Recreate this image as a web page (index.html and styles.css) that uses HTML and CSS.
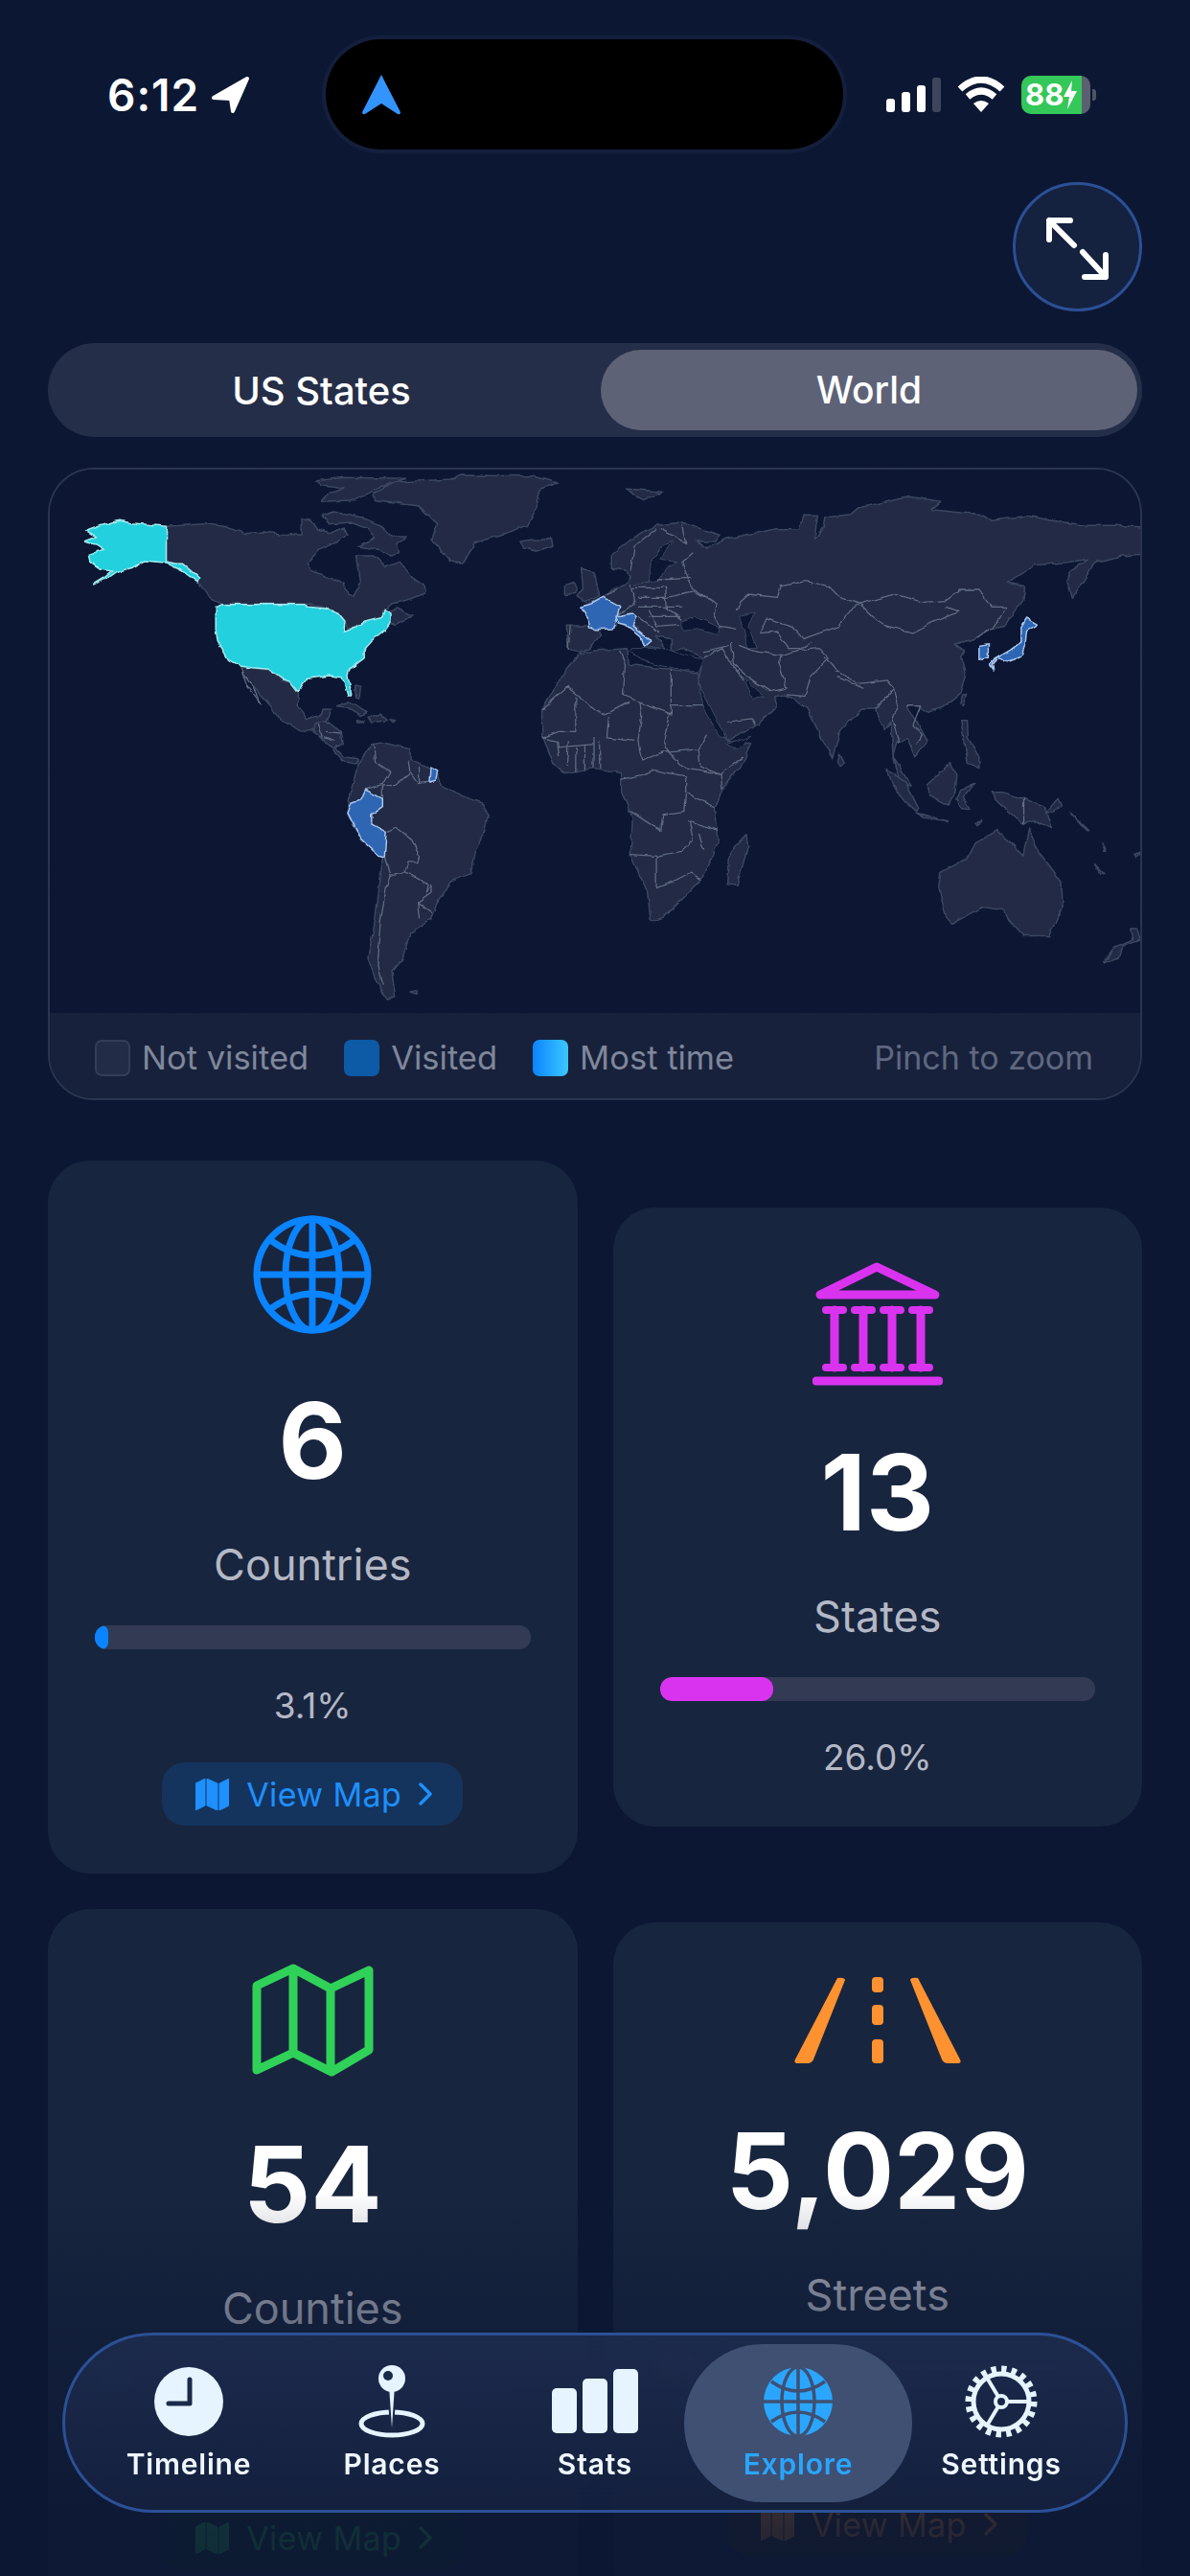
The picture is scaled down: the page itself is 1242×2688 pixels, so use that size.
FILE: index.html
```html
<!DOCTYPE html>
<html lang="en">
<head>
    <meta charset="UTF-8">
    <meta name="viewport" content="width=device-width, initial-scale=1.0">
    <title>Explore</title>
    <link rel="stylesheet" href="styles.css">
</head>
<body>
    <header class="status">
        <div class="status-left">
            <span class="clock">6:12</span>
            <svg class="loc-arrow" width="40" height="38" viewBox="0 0 40 38"><path d="M38 2 L3 22 L21 23 L23 36 Z"/></svg>
        </div>
        <div class="island">
            <svg width="40" height="42" viewBox="0 0 40 42"><path d="M20 0 Q24 8 40 39 Q40 42 37 41 L20 30 L3 41 Q0 42 0 39 Q16 8 20 0 Z" fill="#3393ff"/></svg>
        </div>
        <div class="status-right">
            <div class="signal">
                <i class="sig sig-1"></i><i class="sig sig-2"></i><i class="sig sig-3"></i><i class="sig sig-4"></i>
            </div>
            <svg class="wifi" width="50" height="37" viewBox="0 0 50 37">
                <path d="M3 13 Q25 -7 47 13" />
                <path d="M11 21 Q25 9 39 21" />
                <path class="wifi-dot" d="M17 28 Q25 22 33 28 L25 37 Z"/>
            </svg>
            <div class="battery">
                <span>88</span>
                <svg width="14" height="30" viewBox="0 0 14 30"><path d="M9 0 L0 17 L6 17 L4 30 L14 11 L8 11 Z" fill="#fff"/></svg>
            </div>
            <i class="battery-nub"></i>
        </div>
    </header>

    <div class="expand-row">
        <button class="expand-btn">
            <svg width="135" height="135" viewBox="0 0 135 135">
                <path d="M38 40 L64 66 M38 60 L38 40 L60 40 M73 73 L97 99 M97 76 L97 99 L75 99"/>
            </svg>
        </button>
    </div>

    <div class="segment">
        <div class="seg-item">US States</div>
        <div class="seg-item seg-active">World</div>
    </div>

    <section class="map-card">
        <svg class="map" width="1138" height="567" viewBox="52 490 1138 567">
            <defs>
                <filter id="rough" x="0" y="0" width="100%" height="100%">
                    <feTurbulence type="fractalNoise" baseFrequency="0.09" numOctaves="2" seed="4"/>
                    <feDisplacementMap in="SourceGraphic" scale="5" xChannelSelector="R" yChannelSelector="G"/>
                </filter>
            </defs>
            <g filter="url(#rough)">
            <rect x="52" y="490" width="1138" height="567" fill="#0a1732"/>
            <!-- americas -->
            <g transform="translate(30 480) scale(.3827 .3333)">
                <path class="land" d="M375 208 L480 200 L530 208 L590 230 L640 225 L690 232 L745 235 L745 185 L770 190 L790 220 L820 230 L860 210 L870 235 L830 260 L790 280 L760 320 L770 345 L810 365 L860 385 L870 420 L885 425 L905 380 L895 300 L940 300 L975 335 L1010 320 L1050 370 L1080 395 L1083 415 L1040 435 L990 450 L965 475 L1005 465 L1048 488 L1000 518 L985 510 L960 495 L935 500 L870 530 L862 500 L840 475 L800 460 L755 450 L525 450 L490 430 L465 385 L440 350 L415 325 L375 318 Z"/>
                <path class="land" d="M800 175 L830 162 L880 175 L920 185 L960 205 L990 240 L1030 240 L1005 265 L1010 290 L990 300 L950 280 L895 270 L925 255 L945 245 L925 215 L880 195 L820 200 Z"/>
                <path class="land" d="M785 65 L860 55 L1030 58 L960 85 L890 125 L800 130 L815 105 L860 90 L800 80 Z"/>
                <path class="land" d="M940 105 L1000 70 L1150 60 L1180 48 L1370 50 L1445 72 L1395 90 L1385 150 L1360 205 L1300 230 L1215 260 L1185 325 L1150 318 L1100 250 L1115 200 L1060 140 L945 125 Z"/>
                <path class="land" d="M1340 255 L1370 250 L1425 248 L1430 268 L1385 285 L1350 275 Z"/>
                <path class="land" d="M575 648 L610 652 L655 658 L690 690 L715 698 L735 728 L735 770 L760 810 L795 800 L800 780 L825 780 L815 815 L790 825 L780 850 L740 845 L680 810 L660 770 L620 720 L590 680 Z"/>
                <path class="border" d="M580 655 L610 710 L635 762 L595 710 Z"/>
                <path class="land" d="M780 825 L810 815 L850 850 L855 890 L835 900 L860 930 L900 935 L895 950 L860 945 L830 905 L800 870 L775 850 Z"/>
                <path class="border" d="M790 825 L800 868 M810 850 L850 855 M805 870 L840 880"/>
                <path class="land" d="M840 770 L870 758 L925 790 L905 800 L870 775 Z"/>
                <path class="land" d="M925 805 L960 795 L975 815 L935 822 Z"/>
                <path class="land" d="M895 815 L912 815 L910 822 L895 822 Z"/>
                <path class="land" d="M985 812 L1002 815 L995 822 Z"/>
                <path class="land" d="M890 710 L905 715 L900 750 L893 745 Z"/>
                <path class="land" d="M900 950 L935 890 L965 885 L1040 905 L1040 935 L1090 965 L1115 985 L1130 1025 L1190 1055 L1240 1075 L1255 1115 L1240 1170 L1215 1230 L1205 1295 L1150 1320 L1110 1395 L1095 1440 L1040 1480 L1020 1560 L990 1600 L1000 1680 L975 1686 L945 1620 L925 1560 L945 1440 L960 1300 L965 1245 L905 1190 L870 1110 L875 1050 Z"/>
                <path class="land" d="M1040 1665 L1060 1660 L1058 1672 Z"/>
                <path class="border" d="M940 890 L945 945 L985 975 L965 1015 L918 1032 M965 1060 L965 1020 L1000 1018 L1040 980 L1035 940 M1040 980 L1060 1010 L1095 1005 M1065 960 L1065 1010 M975 1165 L1000 1150 L1045 1190 L1065 1240 L1060 1260 L1035 1260 L1025 1290 L1060 1310 L1090 1330 L1085 1355 M970 1245 L985 1300 L975 1340 L960 1440 L950 1560 L965 1640 M985 1300 L1025 1290 M1085 1355 L1100 1330 L1100 1350 L1060 1385 L1100 1415 M1060 1385 L1065 1435"/>
                <path class="hi" d="M150 255 L185 240 L158 222 L200 205 L245 190 L280 197 L375 208 L375 318 L400 325 L420 325 L445 350 L467 372 L462 385 L440 365 L415 345 L375 322 L318 315 L285 335 L240 350 L215 370 L175 390 L210 365 L230 345 L195 340 L170 320 L165 295 L205 280 L185 265 Z"/>
                <path class="hi" d="M510 460 L525 452 L755 452 L760 460 L810 465 L845 480 L862 505 L860 535 L890 525 L915 505 L965 490 L970 472 L985 480 L985 510 L965 540 L935 565 L915 590 L915 620 L875 655 L870 675 L880 735 L870 735 L855 680 L820 675 L760 685 L735 725 L715 695 L690 685 L655 655 L610 650 L575 645 L545 625 L515 565 L510 530 Z"/>
                <path class="vis" d="M918 1032 L965 1060 L965 1085 L935 1110 L935 1140 L975 1165 L970 1245 L955 1240 L905 1185 L870 1105 L880 1075 L905 1065 Z"/>
                <path class="vis" d="M1095 962 L1115 975 L1110 1000 L1092 1005 Z"/>
            </g>
            <!-- europe, africa, asia, oceania -->
            <g transform="translate(620 480) scale(.3827 .3333)">
                <path class="land" d="M-75 520 L-12 518 L-15 495 L-37 460 L25 430 L45 405 L85 390 L100 365 L85 345 L45 340 L45 300 L110 240 L170 205 L240 195 L290 215 L345 235 L330 255 L280 255 L310 275 L365 245 L390 240 L500 215 L560 215 L570 175 L610 175 L600 250 L625 210 L630 180 L700 170 L720 150 L860 115 L945 130 L920 155 L1000 165 L1060 170 L1085 190 L1180 175 L1250 190 L1340 205 L1420 205 L1495 210 L1495 295 L1440 300 L1365 320 L1350 350 L1305 430 L1290 380 L1300 345 L1350 310 L1290 320 L1200 330 L1130 385 L1175 395 L1170 440 L1120 520 L1085 530 L1045 555 L985 580 L1010 600 L1000 620 L1015 680 L1000 730 L950 775 L910 790 L885 770 L850 770 L880 820 L910 880 L875 930 L855 875 L825 880 L815 930 L865 1020 L835 1015 L815 920 L810 820 L790 845 L770 780 L730 780 L670 850 L650 935 L625 880 L580 775 L520 735 L490 740 L500 770 L440 835 L360 880 L310 770 L285 700 L290 660 L300 620 L240 590 L210 600 L210 560 L170 550 L200 600 L175 585 L135 585 L120 525 L65 510 L60 520 L0 525 L18 545 L-10 590 L-42 605 L-70 590 Z"/>
                <path class="sea" d="M150 380 L155 320 L190 265 L215 255 L180 310 L230 320 L195 335 L180 375 L110 390 Z"/>
                <path class="sea" d="M240 505 L275 490 L345 525 L340 545 L290 530 L240 535 Z"/>
                <path class="sea" d="M395 490 L440 480 L420 520 L445 590 L420 590 L405 520 Z"/>
                <path class="sea" d="M405 680 L465 740 L430 745 Z"/>
                <path class="land" d="M-142 860 L-142 780 L-77 660 L-42 610 L0 597 L90 590 L95 640 L165 650 L210 655 L285 670 L285 700 L360 880 L430 890 L410 940 L350 1030 L330 1090 L340 1190 L300 1300 L260 1350 L190 1430 L155 1445 L145 1350 L100 1240 L105 1120 L75 1040 L75 980 L0 965 L-80 980 L-110 950 Z"/>
                <path class="border" d="M-142 780 L-72 712 L26 800 M-50 740 L-50 850 L-95 850 M-142 870 L-95 850 M70 600 L85 640 L80 730 L125 760 L210 795 L210 655 M210 770 L310 770 M205 795 L190 880 L205 915 L285 905 L310 860 M125 760 L130 800 L120 880 L130 940 M26 800 L100 755 M40 805 L35 870 L110 880 M285 905 L290 960 L345 985 L405 930 M130 940 L200 910 L245 965 L345 985 L350 1030 M75 1000 L130 985 L160 970 L250 990 L250 1040 L245 1100 L185 1110 L180 1160 L100 1100 M100 1235 L170 1240 L240 1225 L270 1190 L260 1130 L340 1160 M285 1170 L300 1220 M170 1240 L170 1340 L215 1320 L265 1290 L290 1310 M0 870 L0 965 M-50 900 L-50 975 M-100 900 L0 890 M250 1040 L330 1090 M-140 870 L-100 880 L-95 930 M-25 890 L-25 970 M15 880 L15 965 M-70 880 L-75 960"/>
                <path class="land" d="M415 1175 L420 1210 L390 1330 L365 1325 L370 1230 Z"/>
                <path class="land" d="M668 920 L680 950 L672 960 L662 940 Z"/>
                <path class="land" d="M1005 735 L1015 735 L1005 770 L998 765 Z"/>
                <path class="land" d="M1000 815 L1018 815 L1020 870 L1050 930 L1050 965 L1020 950 L1010 880 Z"/>
                <path class="land" d="M795 965 L850 1010 L885 1090 L880 1100 L830 1050 Z"/>
                <path class="land" d="M880 1105 L965 1130 L900 1120 Z"/>
                <path class="land" d="M910 1015 L970 950 L990 985 L985 1040 L965 1080 L915 1050 Z"/>
                <path class="land" d="M1000 1030 L1040 1015 L1005 1050 L1025 1095 L1000 1090 L990 1060 Z"/>
                <path class="land" d="M1085 1040 L1115 1040 L1170 1060 L1230 1085 L1250 1155 L1200 1130 L1170 1140 L1130 1100 L1100 1070 Z"/>
                <path class="border" d="M1172 1060 L1172 1140"/>
                <path class="land" d="M1040 1135 L1060 1130 L1045 1142 Z"/>
                <path class="land" d="M1235 1100 L1265 1060 L1275 1085 L1240 1105 Z"/>
                <path class="land" d="M1300 1105 L1350 1160 L1345 1160 Z"/>
                <path class="land" d="M1385 1200 L1395 1225 L1390 1225 Z"/>
                <path class="land" d="M1365 1265 L1390 1295 L1380 1295 Z"/>
                <path class="land" d="M1475 1235 L1495 1225 L1480 1245 Z"/>
                <path class="land" d="M945 1290 L1020 1245 L1040 1200 L1100 1160 L1130 1190 L1170 1240 L1185 1155 L1215 1230 L1275 1320 L1278 1400 L1240 1490 L1170 1490 L1130 1440 L1120 1410 L1060 1400 L975 1450 L960 1430 L940 1340 Z"/>
                <path class="land" d="M1480 1470 L1490 1500 L1440 1520 L1430 1560 L1390 1575 L1420 1525 L1470 1500 L1465 1470 Z"/>
                <path class="land" d="M88 90 L185 100 L135 125 L110 110 Z"/>
                <path class="land" d="M-47 425 L-30 400 L-35 340 L0 350 L15 425 L-20 445 Z"/>
                <path class="land" d="M-80 395 L-50 385 L-50 415 L-80 422 Z"/>
                <path class="border" d="M-65 520 L-70 590 M100 350 L110 270 L170 215 M180 215 L250 260 L240 205 M270 290 L240 320 L265 400 L335 450 L330 485 L345 520 L390 530 M390 470 L400 440 L420 420 L500 430 L510 395 L580 380 L640 395 L670 430 L725 450 L820 420 L900 445 L960 440 L1000 405 L1050 405 L1085 460 L1125 460 L1090 525 L1045 555 M725 450 L760 490 L800 520 L870 540 L920 510 L995 475 L960 460 M450 545 L470 495 L540 520 L570 560 L620 540 L670 520 L690 480 L725 450 M450 545 L500 540 L530 590 L565 590 L590 570 M375 570 L380 640 L420 680 L480 725 L525 715 L505 640 L510 610 L440 600 L395 580 M510 610 L560 595 L615 590 L640 620 L615 650 L590 680 L575 740 L525 735 M630 620 L660 660 L720 700 L800 690 L820 715 L790 750 L770 780 M665 680 L735 715 M820 720 L830 770 L815 810 L830 880 M850 770 L890 770 L870 830 L895 860 L880 890 M300 600 L370 580 M300 620 L350 590 L375 640 L410 690 M360 820 L430 810 L440 830 M100 390 L110 450 L60 490 M105 400 L195 400 L200 470 L240 500 M200 430 L270 410 L335 450 M120 460 L240 460 M60 400 L35 420 M120 490 L180 540 M150 470 L170 520 M1045 555 L1070 535 M175 375 L265 370 M120 430 L200 430 M150 490 L235 490 M170 520 L235 515"/>
                <path class="sea" d="M95 600 L165 640 L285 665 L300 625 L240 610 L190 590 L100 590 Z"/>
                <path class="sea" d="M285 700 L360 870 L340 860 L300 780 Z"/>
                <path class="sea" d="M360 890 L430 865 L395 905 Z"/>
                <path class="vis" d="M-37 460 L-5 450 L25 430 L70 458 L58 510 L50 528 L0 530 L-12 525 L-15 495 Z"/>
                <path class="vis" d="M60 490 L105 480 L115 490 L105 520 L155 565 L135 585 L125 550 L85 515 L65 510 Z"/>
                <path class="vis" d="M1180 495 L1210 515 L1180 535 L1175 580 L1165 615 L1130 630 L1100 620 L1085 640 L1090 660 L1078 640 L1090 625 L1135 595 L1165 570 L1165 525 Z"/>
                <path class="vis" d="M1050 580 L1075 575 L1075 615 L1050 625 Z"/>
            </g>
            </g>
        </svg>
        <div class="legend">
            <i class="swatch swatch-none"></i><span class="legend-text">Not visited</span>
            <i class="swatch swatch-visited"></i><span class="legend-text">Visited</span>
            <i class="swatch swatch-most"></i><span class="legend-text">Most time</span>
            <span class="legend-hint">Pinch to zoom</span>
        </div>
    </section>

    <main class="stats">
        <div class="card">
            <svg class="card-icon icon-blue" width="124" height="124" viewBox="0 0 124 124">
                <circle cx="62" cy="62" r="58"/><ellipse cx="62" cy="62" rx="28" ry="58"/>
                <path d="M62 4 V120 M4 62 H120 M18 26 Q62 58 106 26 M18 98 Q62 66 106 98"/>
            </svg>
            <div class="value">6</div>
            <div class="label">Countries</div>
            <div class="bar"><div class="bar-fill fill-blue" style="width: 3.1%"></div></div>
            <div class="pct">3.1%</div>
            <div class="pill pill-blue">
                <svg width="35" height="33" viewBox="0 0 35 33"><path d="M0 5 L10 0 V28 L0 33 Z M12 0 L23 5 V33 L12 28 Z M25 5 L35 0 V28 L25 33 Z"/></svg>
                <span>View Map</span>
                <svg class="chev" width="14" height="24" viewBox="0 0 14 24"><path d="M2 2 L12 12 L2 22"/></svg>
            </div>
        </div>

        <div class="card card-plain">
            <svg class="card-icon icon-purple" width="136" height="129" viewBox="0 0 136 129">
                <path d="M67 5 L8 34 H128 Z"/>
                <path d="M23 50 V110 M53 50 V110 M83 50 V110 M113 50 V110"/>
                <path class="thin" d="M14 50 H32 M44 50 H62 M74 50 H92 M104 50 H122 M14 110 H32 M44 110 H62 M74 110 H92 M104 110 H122"/>
                <path d="M4 124 H132"/>
            </svg>
            <div class="value">13</div>
            <div class="label">States</div>
            <div class="bar"><div class="bar-fill fill-purple" style="width: 26%"></div></div>
            <div class="pct">26.0%</div>
        </div>

        <div class="card">
            <svg class="card-icon icon-green" width="127" height="119" viewBox="0 0 127 119">
                <path d="M5 23 L43 5 L82 26 L122 7 V90 L83 113 L43 93 L5 111 Z M43 5 V93 M82 26 V113"/>
            </svg>
            <div class="value">54</div>
            <div class="label">Counties</div>
            <div class="bar"><div class="bar-fill fill-green" style="width: 1.7%"></div></div>
            <div class="pct">1.7%</div>
            <div class="pill pill-green">
                <svg width="35" height="33" viewBox="0 0 35 33"><path d="M0 5 L10 0 V28 L0 33 Z M12 0 L23 5 V33 L12 28 Z M25 5 L35 0 V28 L25 33 Z"/></svg>
                <span>View Map</span>
                <svg class="chev" width="14" height="24" viewBox="0 0 14 24"><path d="M2 2 L12 12 L2 22"/></svg>
            </div>
        </div>

        <div class="card">
            <svg class="card-icon" width="174" height="91" viewBox="0 0 174 91" fill="#ff9230">
                <path d="M45 1 Q52 0 53 3 L20 86 Q18 90 14 90 L4 90 Q-1 90 1 86 Z"/>
                <path d="M129 1 Q122 0 121 3 L154 86 Q156 90 160 90 L170 90 Q175 90 173 86 Z"/>
                <rect x="81" y="0" width="12" height="16" rx="4"/>
                <rect x="81" y="29" width="12" height="21" rx="4"/>
                <rect x="81" y="65" width="12" height="25" rx="4"/>
            </svg>
            <div class="value">5,029</div>
            <div class="label">Streets</div>
            <div class="bar"><div class="bar-fill fill-orange" style="width: 2.4%"></div></div>
            <div class="pct">0.9%</div>
            <div class="pill pill-orange">
                <svg width="35" height="33" viewBox="0 0 35 33"><path d="M0 5 L10 0 V28 L0 33 Z M12 0 L23 5 V33 L12 28 Z M25 5 L35 0 V28 L25 33 Z"/></svg>
                <span>View Map</span>
                <svg class="chev" width="14" height="24" viewBox="0 0 14 24"><path d="M2 2 L12 12 L2 22"/></svg>
            </div>
        </div>
    </main>

    <div class="fade"></div>

    <nav class="tabbar">
        <div class="tab">
            <svg width="78" height="78" viewBox="0 0 78 78">
                <circle cx="39" cy="39" r="36" fill="#e6f4ff"/>
                <path d="M40 16 V41 H18" fill="none" stroke="#1b2a4b" stroke-width="5" stroke-linecap="round" stroke-linejoin="round"/>
            </svg>
            <span>Timeline</span>
        </div>
        <div class="tab">
            <svg width="78" height="78" viewBox="0 0 78 78">
                <ellipse cx="39" cy="62" rx="32" ry="12" fill="none" stroke="#e6f4ff" stroke-width="5"/>
                <path d="M35 22 H43 L40 66 H38 Z" fill="#e6f4ff" stroke="#1b2a4b" stroke-width="2"/>
                <circle cx="39" cy="15" r="14" fill="#e6f4ff"/>
                <circle cx="35" cy="12" r="5" fill="#1b2a4b"/>
            </svg>
            <span>Places</span>
        </div>
        <div class="tab">
            <svg width="90" height="78" viewBox="0 0 90 78" fill="#e6f4ff">
                <rect x="0" y="25" width="26" height="47" rx="5"/>
                <rect x="32" y="15" width="26" height="57" rx="5"/>
                <rect x="64" y="5" width="26" height="67" rx="5"/>
            </svg>
            <span>Stats</span>
        </div>
        <div class="tab tab-active">
            <svg width="78" height="78" viewBox="0 0 78 78">
                <circle cx="39" cy="39" r="36" fill="#2aa6ff"/>
                <g fill="none" stroke="#3f5072" stroke-width="3.5">
                    <ellipse cx="39" cy="39" rx="17" ry="36"/>
                    <path d="M39 3 V75 M3 39 H75 M11 18 Q39 38 67 18 M11 60 Q39 40 67 60"/>
                </g>
            </svg>
            <span>Explore</span>
        </div>
        <div class="tab">
            <svg width="78" height="78" viewBox="0 0 78 78" fill="none" stroke="#e6f4ff">
                <circle cx="39" cy="39" r="33" stroke-width="9" stroke-dasharray="5.2 5.16"/>
                <circle cx="39" cy="39" r="29" stroke-width="5"/>
                <circle cx="39" cy="39" r="6" stroke-width="4"/>
                <path d="M45 39 H68 M36 34 L24 14 M36 44 L24 64" stroke-width="4"/>
            </svg>
            <span>Settings</span>
        </div>
    </nav>
</body>
</html>
```

FILE: styles.css
```css
* {
    box-sizing: border-box;
}

html, body {
    margin: 0;
    padding: 0;
}

body {
    position: relative;
    width: 1242px;
    height: 2688px;
    overflow: hidden;
    background-color: #0c1833;
    color: white;
    font-family: Inter, "Noto Sans", sans-serif;
}

/* status bar */
.status {
    display: flex;
    align-items: center;
    padding: 41px 0 0 112px;
}

.status-left {
    display: flex;
    align-items: center;
    gap: 12px;
    width: 228px;
}

.clock {
    font-size: 46px;
    font-weight: 600;
    letter-spacing: 1px;
    line-height: 1;
}

.loc-arrow path {
    fill: white;
    stroke: white;
    stroke-width: 4;
    stroke-linejoin: round;
}

.island {
    display: flex;
    align-items: center;
    width: 540px;
    height: 115px;
    padding-left: 38px;
    background-color: black;
    border-radius: 58px;
    box-shadow: 0 0 0 4px #141f3d;
}

.status-right {
    display: flex;
    align-items: center;
    margin-left: 45px;
}

.signal {
    display: flex;
    align-items: flex-end;
    gap: 7px;
    height: 36px;
    margin-right: 17px;
}

.sig {
    display: block;
    width: 9px;
    background-color: white;
    border-radius: 3px;
}

.sig-1 { height: 14px; }
.sig-2 { height: 21px; }
.sig-3 { height: 28px; }
.sig-4 { height: 36px; background-color: #3d465c; }

.wifi {
    margin-right: 17px;
}

.wifi path {
    fill: none;
    stroke: white;
    stroke-width: 7;
}

.wifi .wifi-dot {
    fill: white;
    stroke: none;
}

.battery {
    display: flex;
    align-items: center;
    width: 72px;
    height: 40px;
    padding-left: 4px;
    background: linear-gradient(90deg, #34c759 88%, #5a6070 88%);
    border-radius: 10px;
    font-size: 31px;
    font-weight: 700;
    line-height: 1;
}

.battery-nub {
    display: block;
    width: 4px;
    height: 12px;
    margin-left: 2px;
    background-color: #4d5466;
    border-radius: 0 3px 3px 0;
}

/* expand button */
.expand-row {
    display: flex;
    justify-content: flex-end;
    padding: 34px 50px 0 0;
}

.expand-btn {
    width: 135px;
    height: 135px;
    padding: 0;
    background-color: #14213f;
    border: 3px solid #2c4f95;
    border-radius: 50%;
}

.expand-btn svg {
    display: block;
    margin: -3px;
}

.expand-btn path {
    fill: none;
    stroke: white;
    stroke-width: 6;
    stroke-linecap: round;
    stroke-linejoin: round;
}

/* segmented control */
.segment {
    display: flex;
    align-items: center;
    height: 98px;
    margin: 33px 50px 0;
    padding: 0 5px 0 0;
    background-color: #252e48;
    border-radius: 49px;
}

.seg-item {
    font-size: 39px;
    font-weight: 500;
    text-align: center;
}

.seg-item:first-child {
    width: 577px;
    padding-right: 6px;
    font-size: 40px;
}

.seg-active {
    width: 560px;
    height: 84px;
    line-height: 84px;
    background-color: #5d6277;
    border-radius: 42px;
}

/* map */
.map-card {
    height: 660px;
    margin: 32px 50px 0;
    background-color: #0a1732;
    border: 2px solid #2a3550;
    border-radius: 48px;
    overflow: hidden;
}

.map {
    display: block;
}

.map path {
    vector-effect: non-scaling-stroke;
    stroke-linejoin: round;
}

.land {
    fill: #202a44;
    stroke: #3d4760;
    stroke-width: 1.5;
}

.border {
    fill: none;
    stroke: #626c83;
    stroke-width: 1.3;
}

.sea {
    fill: #0a1732;
    stroke: #3d4760;
    stroke-width: 1;
}

.hi {
    fill: #22d0de;
    stroke: #a5eaf0;
    stroke-width: 1.5;
}

.vis {
    fill: #2e66b4;
    stroke: #a9c6ee;
    stroke-width: 1.5;
}

.legend {
    display: flex;
    align-items: center;
    height: 89px;
    padding: 5px 49px 0 47px;
    background-color: #18213b;
    font-size: 34.5px;
    line-height: 1;
}

.swatch {
    display: block;
    flex: none;
    width: 37px;
    height: 38px;
    border-radius: 7px;
    margin-right: 12px;
}

.swatch-none {
    background-color: #232c47;
    border: 2px solid #343d57;
}

.swatch-visited {
    background-color: #0d5aa7;
}

.swatch-most {
    background: linear-gradient(90deg, #0a84ff, #3cc8ff);
}

.legend-text {
    margin-right: 37px;
    color: #7f879b;
}

.legend-hint {
    margin-left: auto;
    color: #5f6880;
    font-size: 34px;
}

/* stat cards */
.stats {
    display: grid;
    grid-template-columns: 1fr 1fr;
    align-items: center;
    gap: 37px;
    margin: 63px 50px 0;
}

.card {
    display: flex;
    flex-direction: column;
    align-items: center;
    padding: 57px 49px 50px;
    background-color: #18253f;
    border-radius: 44px;
}

.card-plain {
    padding-bottom: 53px;
}

.card-icon {
    display: block;
    flex: none;
}

.icon-blue * {
    fill: none;
    stroke: #0a84ff;
    stroke-width: 7;
}

.icon-purple path {
    fill: none;
    stroke: #da33f0;
    stroke-width: 9;
    stroke-linecap: round;
    stroke-linejoin: round;
}

.icon-purple .thin {
    stroke-width: 8;
}

.icon-green path {
    fill: none;
    stroke: #30d158;
    stroke-width: 9;
    stroke-linejoin: round;
}

.value {
    margin-top: 56px;
    font-size: 110px;
    font-weight: 700;
    line-height: 110px;
    white-space: nowrap;
}

.label {
    margin-top: 53px;
    color: #b4b8c5;
    font-size: 45px;
    line-height: 44px;
}

.bar {
    width: 100%;
    height: 25px;
    margin-top: 41px;
    background-color: #323a54;
    border-radius: 12px;
    overflow: hidden;
}

.bar-fill {
    height: 100%;
    min-width: 14px;
    border-radius: 12px;
}

.fill-blue { background-color: #0a84ff; }
.fill-purple { background-color: #da33f0; }
.fill-green { background-color: #30d158; }
.fill-orange { background-color: #ff9230; }

.pct {
    margin-top: 40px;
    color: #b4b8c5;
    font-size: 37px;
    line-height: 38px;
}

.pill {
    display: flex;
    align-items: center;
    gap: 18px;
    height: 66px;
    margin-top: 40px;
    padding: 0 32px 0 35px;
    border-radius: 24px;
    font-size: 34px;
    letter-spacing: 0.4px;
}

.pill svg {
    flex: none;
}

.pill .chev {
    fill: none;
    stroke-width: 3.5;
    stroke-linecap: round;
    stroke-linejoin: round;
}

.pill-blue { color: #1e90ff; background-color: #14345e; fill: #1e90ff; stroke: #1e90ff; }
.pill-green { color: #30d158; background-color: #123029; fill: #30d158; stroke: #30d158; }
.pill-orange { color: #ff9230; background-color: #2e2620; fill: #ff9230; stroke: #ff9230; }

/* content fades out toward the bottom */
.fade {
    position: absolute;
    left: 0;
    right: 0;
    bottom: 0;
    height: 400px;
    background: linear-gradient(180deg, rgba(12, 24, 51, 0) 0%, rgba(12, 24, 51, 0.4) 30%, rgba(12, 24, 51, 0.88) 88%);
}

/* tab bar */
.tabbar {
    position: absolute;
    left: 65px;
    top: 2434px;
    display: flex;
    align-items: center;
    justify-content: center;
    width: 1112px;
    height: 188px;
    background: linear-gradient(180deg, rgba(29, 43, 78, 0.92), rgba(20, 32, 62, 0.92));
    border: 3px solid #2c5096;
    border-radius: 94px;
    backdrop-filter: blur(14px);
}

.tab {
    display: flex;
    flex-direction: column;
    align-items: center;
    flex: none;
    width: 212px;
    height: 165px;
    padding-top: 21px;
    font-size: 30px;
    font-weight: 600;
    letter-spacing: 0.8px;
    line-height: 30px;
    color: #eef7ff;
}

.tab svg {
    display: block;
    flex: none;
    margin-bottom: 11px;
}

.tab-active {
    width: 238px;
    margin: 0 -13px;
    background-color: #3f5072;
    border-radius: 82px;
    color: #2aa6ff;
}
```
